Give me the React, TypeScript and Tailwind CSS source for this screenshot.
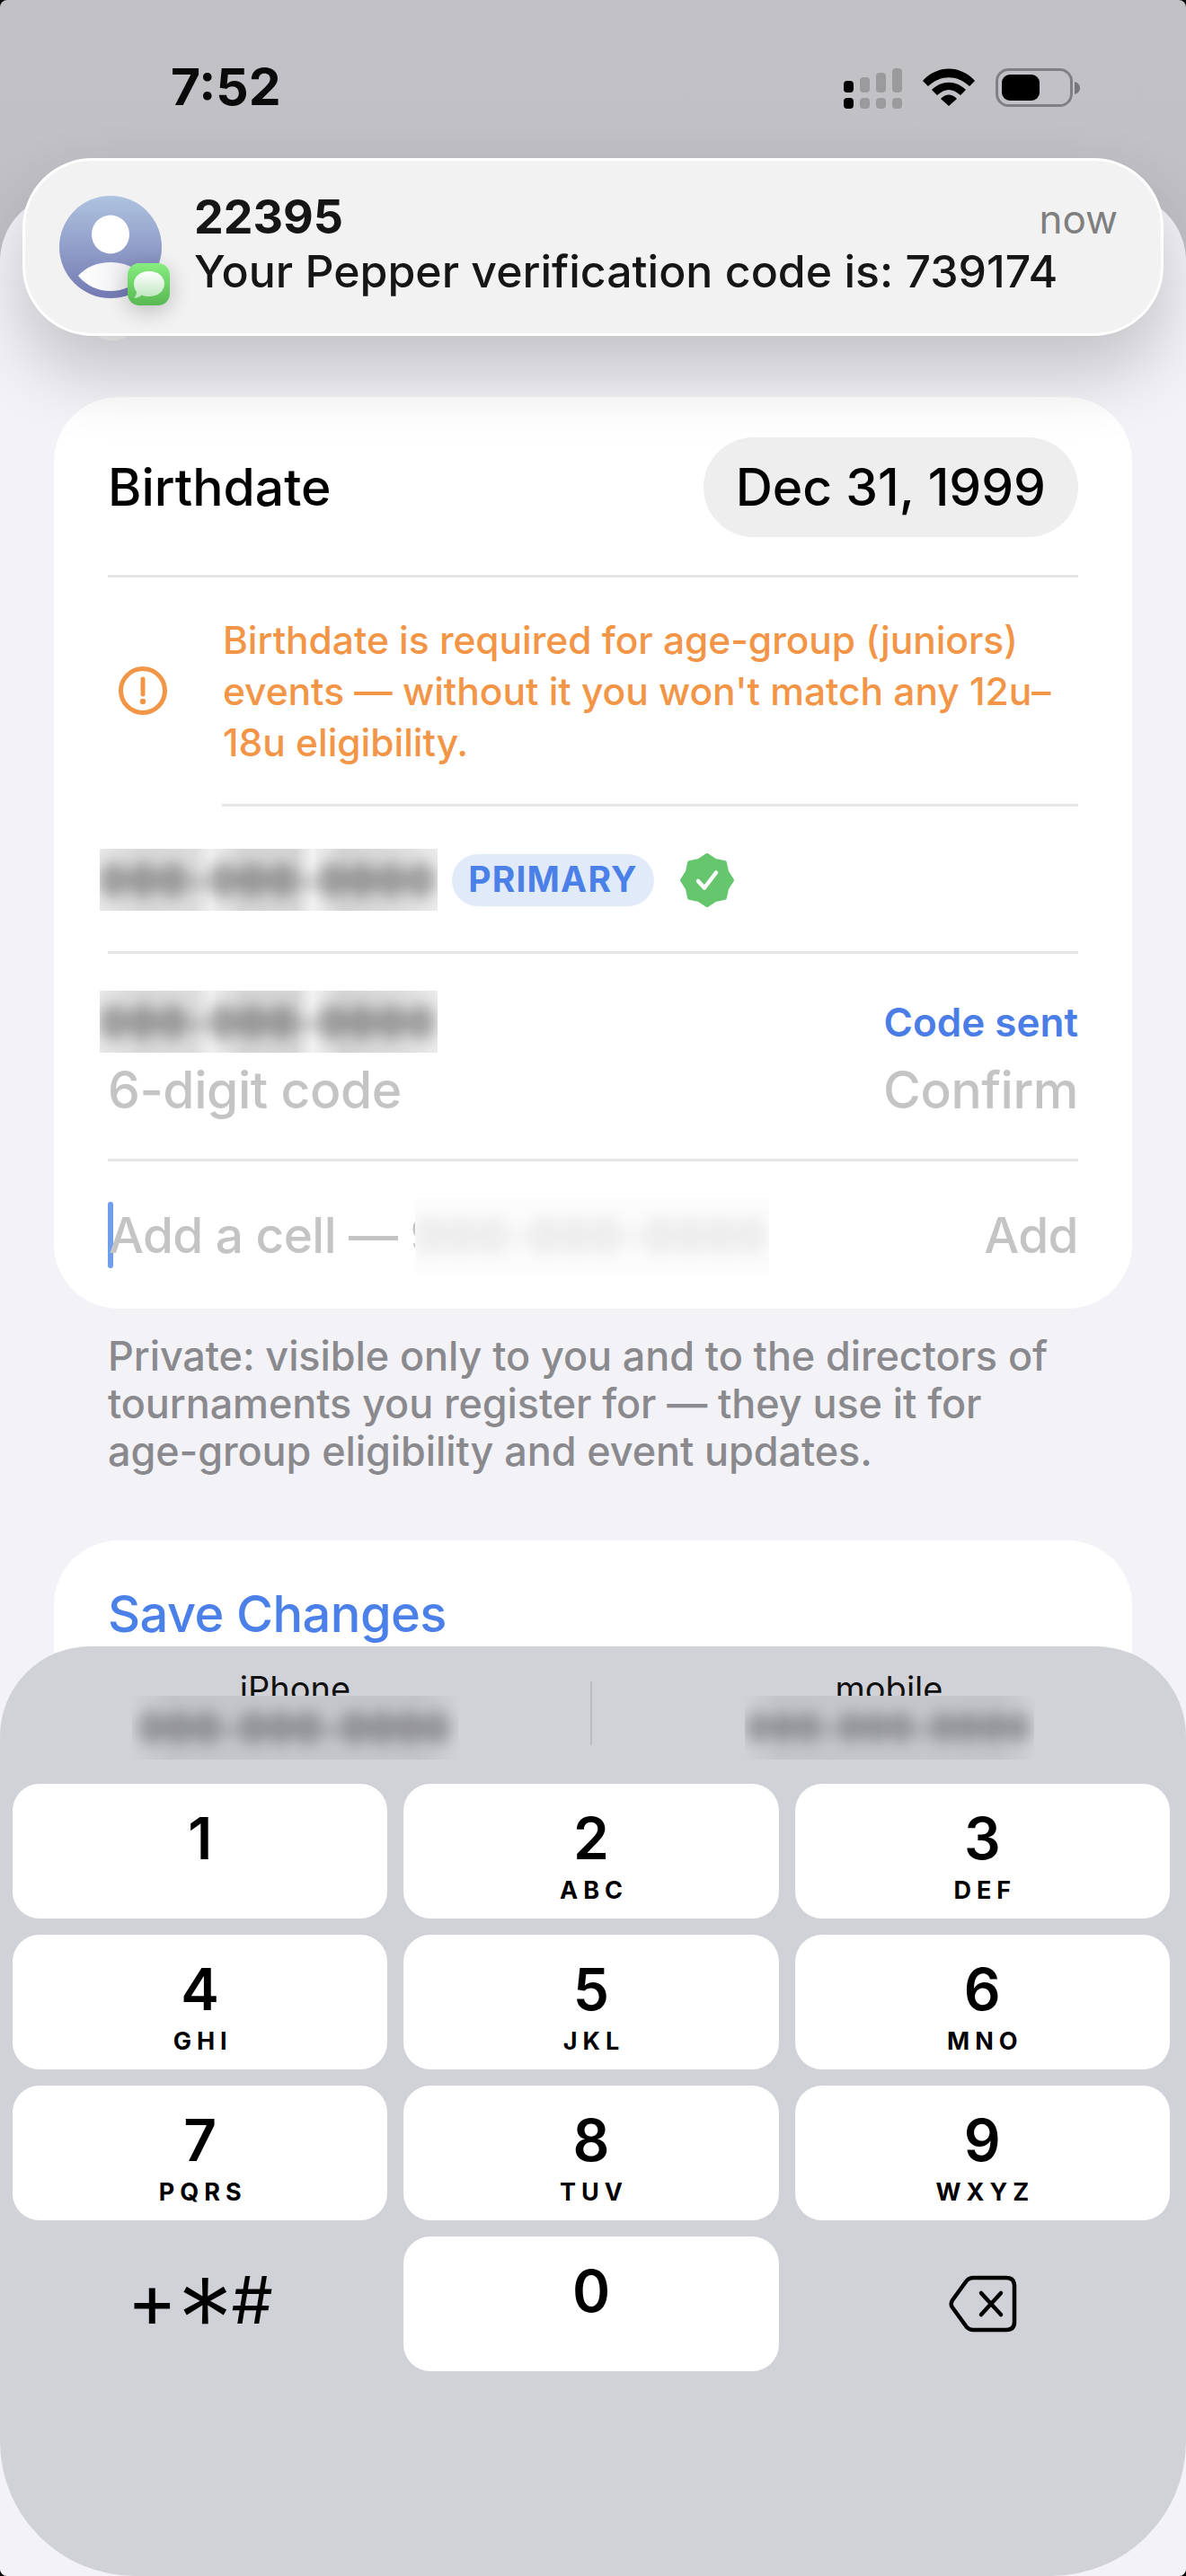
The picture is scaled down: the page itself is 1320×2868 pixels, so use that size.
import React from "react";

// ---------------------------------------------------------------------------
// Helpers
// ---------------------------------------------------------------------------

const KEYS = [
  { d: "1", l: "" },
  { d: "2", l: "ABC" },
  { d: "3", l: "DEF" },
  { d: "4", l: "GHI" },
  { d: "5", l: "JKL" },
  { d: "6", l: "MNO" },
  { d: "7", l: "PQRS" },
  { d: "8", l: "TUV" },
  { d: "9", l: "WXYZ" },
];

const CARD_BLUR =
  "bg-[linear-gradient(90deg,#e8e8e8,#d8d8d8_12%,#dcdcdc_28%,#f0f0f0_33%,#d6d6d6_42%,#d6d6d6_58%,#f2f2f2_63%,#d4d4d4_72%,#dedede_90%,#ececec)]";
const KEYBOARD_BLUR = "bg-[linear-gradient(90deg,#d1d2d7,#c4c5ca_12%,#c6c7cc_50%,#c4c5ca_88%,#d1d2d7)]";

function Redacted({ className, text, textClass }: { className: string; text: string; textClass: string }) {
  return (
    <div className={`flex items-center justify-center overflow-hidden shrink-0 ${className}`}>
      <span className={`whitespace-nowrap ${textClass}`}>{text}</span>
    </div>
  );
}

function Divider({ className = "" }: { className?: string }) {
  return <div className={`h-[3px] bg-[#e6e6e8] ${className}`} />;
}

function Key({ d, l }: { d: string; l: string }) {
  return (
    <div className="h-[150px] bg-white rounded-[30px] flex flex-col items-center">
      <span className="mt-[29px] h-[64px] text-[64px] leading-[64px] font-[560] text-black">{d}</span>
      <span className="mt-[12px] h-[28px] text-[27px] leading-[28px] font-bold tracking-[6px] pl-[6px] text-black">{l}</span>
    </div>
  );
}

// ---------------------------------------------------------------------------
// Icons
// ---------------------------------------------------------------------------

function SignalIcon() {
  const top = [
    { x: 0, y: 14, c: "#000" },
    { x: 18, y: 10, c: "#9b9b9d" },
    { x: 36, y: 5, c: "#9b9b9d" },
    { x: 54, y: 0, c: "#9b9b9d" },
  ];
  return (
    <svg width="65" height="46" viewBox="0 0 65 46">
      {top.map((b) => (
        <g key={b.x} fill={b.c}>
          <rect x={b.x} y={b.y} width="11" height={27 - b.y} rx="4" />
          <rect x={b.x} y="33" width="11" height="12" rx="4" />
        </g>
      ))}
    </svg>
  );
}

function WifiIcon() {
  return (
    <svg width="58" height="42" viewBox="0 0 58 42">
      <path d="M0 14 C16 -4 42 -4 58 14 L52 20 C38 7 20 7 6 20Z" />
      <path d="M10 24 C21 13 37 13 48 24 L42 30 C33 22 25 22 16 30Z" />
      <path d="M20 34 C25 28 33 28 38 34 L29 42Z" />
    </svg>
  );
}

function BatteryIcon() {
  return (
    <svg width="94" height="44" viewBox="0 0 94 44">
      <rect x="1.5" y="1.5" width="83" height="40" rx="13" fill="none" stroke="#808084" strokeWidth="3" />
      <rect x="7" y="7" width="42" height="29" rx="9" fill="#000" />
      <path d="M88 15 C92 16 94 19 94 22 C94 25 92 28 88 29Z" fill="#77777b" />
    </svg>
  );
}

function Avatar() {
  return (
    <div className="relative w-[122px] h-[124px] shrink-0">
      <svg width="114" height="114" viewBox="0 0 114 114">
        <defs>
          <linearGradient id="av" x1="0" y1="0" x2="0" y2="1">
            <stop offset="0" stopColor="#aec3df" />
            <stop offset="1" stopColor="#7479b3" />
          </linearGradient>
          <linearGradient id="body" x1="0" y1="0" x2="1" y2="0">
            <stop offset="0" stopColor="#ffffff" />
            <stop offset="1" stopColor="#e9e9ee" />
          </linearGradient>
        </defs>
        <circle cx="57" cy="57" r="57" fill="url(#av)" />
        <ellipse cx="57" cy="43" rx="21" ry="21.5" fill="#fff" />
        <path d="M21 89 C30 79 43 74 57 74 C71 74 84 79 93 89 C84 100 71 106 57 106 C43 106 30 100 21 89Z" fill="url(#body)" />
      </svg>
      <div className="absolute left-[76px] top-[75px] w-[47px] h-[47px] rounded-[13px] bg-gradient-to-b from-[#86ee7e] to-[#58b852] shadow-[0_6px_24px_rgba(0,0,0,0.22)] flex items-center justify-center">
        <svg width="38" height="34" viewBox="0 0 38 34">
          <defs>
            <linearGradient id="bub" x1="0" y1="0" x2="0" y2="1">
              <stop offset="0" stopColor="#ffffff" />
              <stop offset="1" stopColor="#bfe6bd" />
            </linearGradient>
          </defs>
          <path d="M19 2 C29 2 36 8 36 16 C36 24 29 30 19 30 C16 30 13 29.5 11 28.5 C8 31 5 32 2 31.5 C4 30 5 27.5 5 25 C3 22.5 2 19.5 2 16 C2 8 9 2 19 2Z" fill="url(#bub)" />
        </svg>
      </div>
    </div>
  );
}

function VerifiedBadge() {
  const pts: string[] = [];
  for (let i = 0; i < 16; i++) {
    const r = i % 2 === 0 ? 28 : 24;
    const a = (i * Math.PI) / 8 - Math.PI / 2;
    pts.push(`${(30 + r * Math.cos(a)).toFixed(2)},${(30 + r * Math.sin(a)).toFixed(2)}`);
  }
  return (
    <svg width="60" height="60" viewBox="0 0 60 60" className="shrink-0">
      <polygon points={pts.join(" ")} fill="#66c66d" stroke="#66c66d" strokeWidth="4" strokeLinejoin="round" />
      <path d="M20 31 L27 38.5 L40 21.5" fill="none" stroke="#fff" strokeWidth="4.5" strokeLinecap="round" strokeLinejoin="round" />
    </svg>
  );
}

function WarningIcon() {
  return (
    <svg width="54" height="54" viewBox="0 0 54 54" className="shrink-0">
      <circle cx="27" cy="27" r="24.5" fill="none" stroke="#f29547" strokeWidth="5" />
      <path d="M27 14 L27 31" stroke="#f29547" strokeWidth="5" strokeLinecap="round" />
      <circle cx="27" cy="39" r="3.2" fill="#f29547" />
    </svg>
  );
}

function DeleteIcon() {
  return (
    <svg width="76" height="64" viewBox="0 0 76 64" fill="none" stroke="#000" strokeWidth="4.5" strokeLinecap="round" strokeLinejoin="round">
      <path d="M27 3 L64 3 C70 3 73 6 73 12 L73 52 C73 58 70 61 64 61 L27 61 C24 61 22 60 20 58 L4 36 C2 33 2 31 4 28 L20 6 C22 4 24 3 27 3Z" />
      <path d="M36 20 L58 44 M58 20 L36 44" />
    </svg>
  );
}

// ---------------------------------------------------------------------------
// Page
// ---------------------------------------------------------------------------

export default function App() {
  return (
    <div className="bg-black w-[1320px] h-[2868px] font-[Inter,sans-serif]">
      <div className="relative w-full h-full overflow-hidden rounded-[8px] bg-gradient-to-b from-[#c2c1c6] to-[#b6b6b8]">
        {/* Status bar */}
        <div className="h-[215px] flex items-start justify-between pl-[190px] pr-[118px] pt-[66px]">
          <span className="text-[57px] leading-[62px] font-bold text-[#0a0a0a]">7:52</span>
          <div className="flex items-start gap-[23px] pt-[10px]">
            <SignalIcon />
            <WifiIcon />
            <BatteryIcon />
          </div>
        </div>

        {/* Sheet */}
        <div className="relative h-[2653px] bg-[#f2f2f7] rounded-t-[76px] px-[60px] pt-[227px]">
          <div className="absolute left-[100px] top-[120px] w-[50px] h-[44px] rounded-full bg-white" />

          {/* Profile card */}
          <div className="relative bg-white rounded-[72px] px-[60px]">
            <div className="pt-[45px] pb-[42px] flex items-center justify-between">
              <span className="text-[57px] leading-[66px] font-[550] text-black">Birthdate</span>
              <span className="h-[111px] px-[36px] flex items-center rounded-full bg-[#eeeeef] text-[57px] font-[550] text-black">
                Dec 31, 1999
              </span>
            </div>
            <Divider />
            <div className="h-[252px] flex items-center pl-[12px] gap-[62px]">
              <WarningIcon />
              <p className="text-[42.5px] leading-[57px] font-[550] text-[#f29547] tracking-[-0.05px]">
                Birthdate is required for age-group (juniors)
                <br />
                events — without it you won't match any 12u–
                <br />
                18u eligibility.
              </p>
            </div>
            <Divider className="ml-[127px]" />
            <div className="h-[161px] pt-[2px] flex items-center -ml-[9px]">
              <Redacted className={`w-[376px] h-[69px] ${CARD_BLUR}`} text="000-000-0000" textClass="text-[44px] font-bold tracking-[3px] text-[#4a4a4a] blur-[9px]" />
              <span className="ml-[16px] w-[225px] h-[58px] rounded-full bg-[#e1eaf9] flex items-center justify-center text-[39px] font-bold tracking-[1.2px] text-[#4a80e8]">
                PRIMARY
              </span>
              <div className="ml-[29px]">
                <VerifiedBadge />
              </div>
            </div>
            <Divider />
            <div className="pt-[41px] pb-[46px]">
              <div className="flex items-center justify-between -ml-[9px]">
                <Redacted className={`w-[376px] h-[69px] ${CARD_BLUR}`} text="000-000-0000" textClass="text-[44px] font-bold tracking-[3px] text-[#4a4a4a] blur-[9px]" />
                <span className="text-[44px] font-semibold text-[#4a7de6]">Code sent</span>
              </div>
              <div className="mt-[12px] h-[60px] flex items-center justify-between text-[57px] font-[550] text-[#c4c4c4] tracking-[-0.45px]">
                <span>6-digit code</span>
                <span>Confirm</span>
              </div>
            </div>
            <Divider />
            <div className="relative h-[164px] flex items-center justify-between">
              <div className="flex items-center">
                <div className="w-[6px] h-[74px] rounded-full bg-[#6f9eec]" />
                <span className="-ml-[5px] text-[55px] font-medium text-[#c4c4c4] tracking-[-0.6px]">Add a cell — 9</span>
              </div>
              <span className="text-[55px] font-medium text-[#c4c4c4] tracking-[-0.6px]">Add</span>
              <Redacted className="absolute left-[342px] top-[41px] w-[394px] h-[83px] bg-[#fcfcfc]" text="000-000-0000" textClass="text-[48px] font-medium tracking-[3px] text-[#d0d0d0] blur-[10px]" />
            </div>
          </div>

          <p className="mt-[26px] px-[60px] text-[45px] leading-[53px] font-medium text-[#8a8a8e] tracking-[-0.1px] whitespace-nowrap">
            Private: visible only to you and to the directors of
            <br />
            tournaments you register for — they use it for
            <br />
            age-group eligibility and event updates.
          </p>

          <div className="mt-[73px] h-[220px] bg-white rounded-[72px] px-[60px] pt-[52px]">
            <span className="text-[56px] leading-[60px] font-medium text-[#4a80e8] tracking-[-0.6px]">Save Changes</span>
          </div>
        </div>

        {/* SMS notification */}
        <div className="absolute left-[25px] top-[176px] w-[1270px] h-[198px] bg-[#f2f2f3] border-[3px] border-white rounded-[78px] shadow-[0_40px_80px_rgba(0,0,0,0.2)] flex items-start pl-[38px] pt-[39px] pr-[48px]">
          <Avatar />
          <div className="ml-[28px] flex-1 -mt-[4px]">
            <div className="flex items-baseline justify-between">
              <span className="text-[52px] leading-[56px] font-bold text-[#161616]">22395</span>
              <span className="text-[44px] leading-[56px] text-[#7f7f7f]">now</span>
            </div>
            <div className="text-[50px] leading-[60px] font-medium text-[#161616] whitespace-nowrap">
              Your Pepper verification code is: 739174
            </div>
          </div>
        </div>

        {/* Keyboard */}
        <div className="absolute inset-x-0 bottom-0 h-[1035px] bg-[#d1d2d7] rounded-t-[100px] rounded-b-[150px]">
          <div className="h-[153px] flex items-start">
            <div className="w-[657px] flex flex-col items-center pt-[26px]">
              <span className="h-[29px] text-[38px] leading-[42px] text-[#111111]">iPhone</span>
              <Redacted className={`relative w-[363px] h-[71px] ${KEYBOARD_BLUR}`} text="000-000-0000" textClass="text-[42px] font-bold tracking-[2px] text-[#55565b] blur-[9px]" />
            </div>
            <div className="w-[2px] h-[71px] mt-[39px] bg-[#bcbdc2]" />
            <div className="flex-1 flex flex-col items-center pt-[26px]">
              <span className="h-[29px] text-[38px] leading-[42px] text-[#111111]">mobile</span>
              <Redacted className={`relative w-[322px] h-[71px] ${KEYBOARD_BLUR}`} text="000-000-0000" textClass="text-[38px] font-bold tracking-[2px] text-[#55565b] blur-[9px]" />
            </div>
          </div>
          <div className="grid grid-cols-3 gap-[18px] pl-[14px] pr-[18px]">
            {KEYS.map((k) => (
              <Key key={k.d} d={k.d} l={k.l} />
            ))}
            <div className="h-[150px] flex items-center justify-center text-black">
              <span className="text-[84px] leading-[66px] font-normal -mt-[8px]">+</span>
              <span className="text-[125px] leading-[66px] font-light -mr-[2px] mt-[34px]">*</span>
              <span className="text-[73px] leading-[66px] font-normal -mt-[8px]">#</span>
            </div>
            <Key d="0" l="" />
            <div className="h-[150px] flex items-center justify-center pl-[2px]">
              <DeleteIcon />
            </div>
          </div>
        </div>
      </div>
    </div>
  );
}
